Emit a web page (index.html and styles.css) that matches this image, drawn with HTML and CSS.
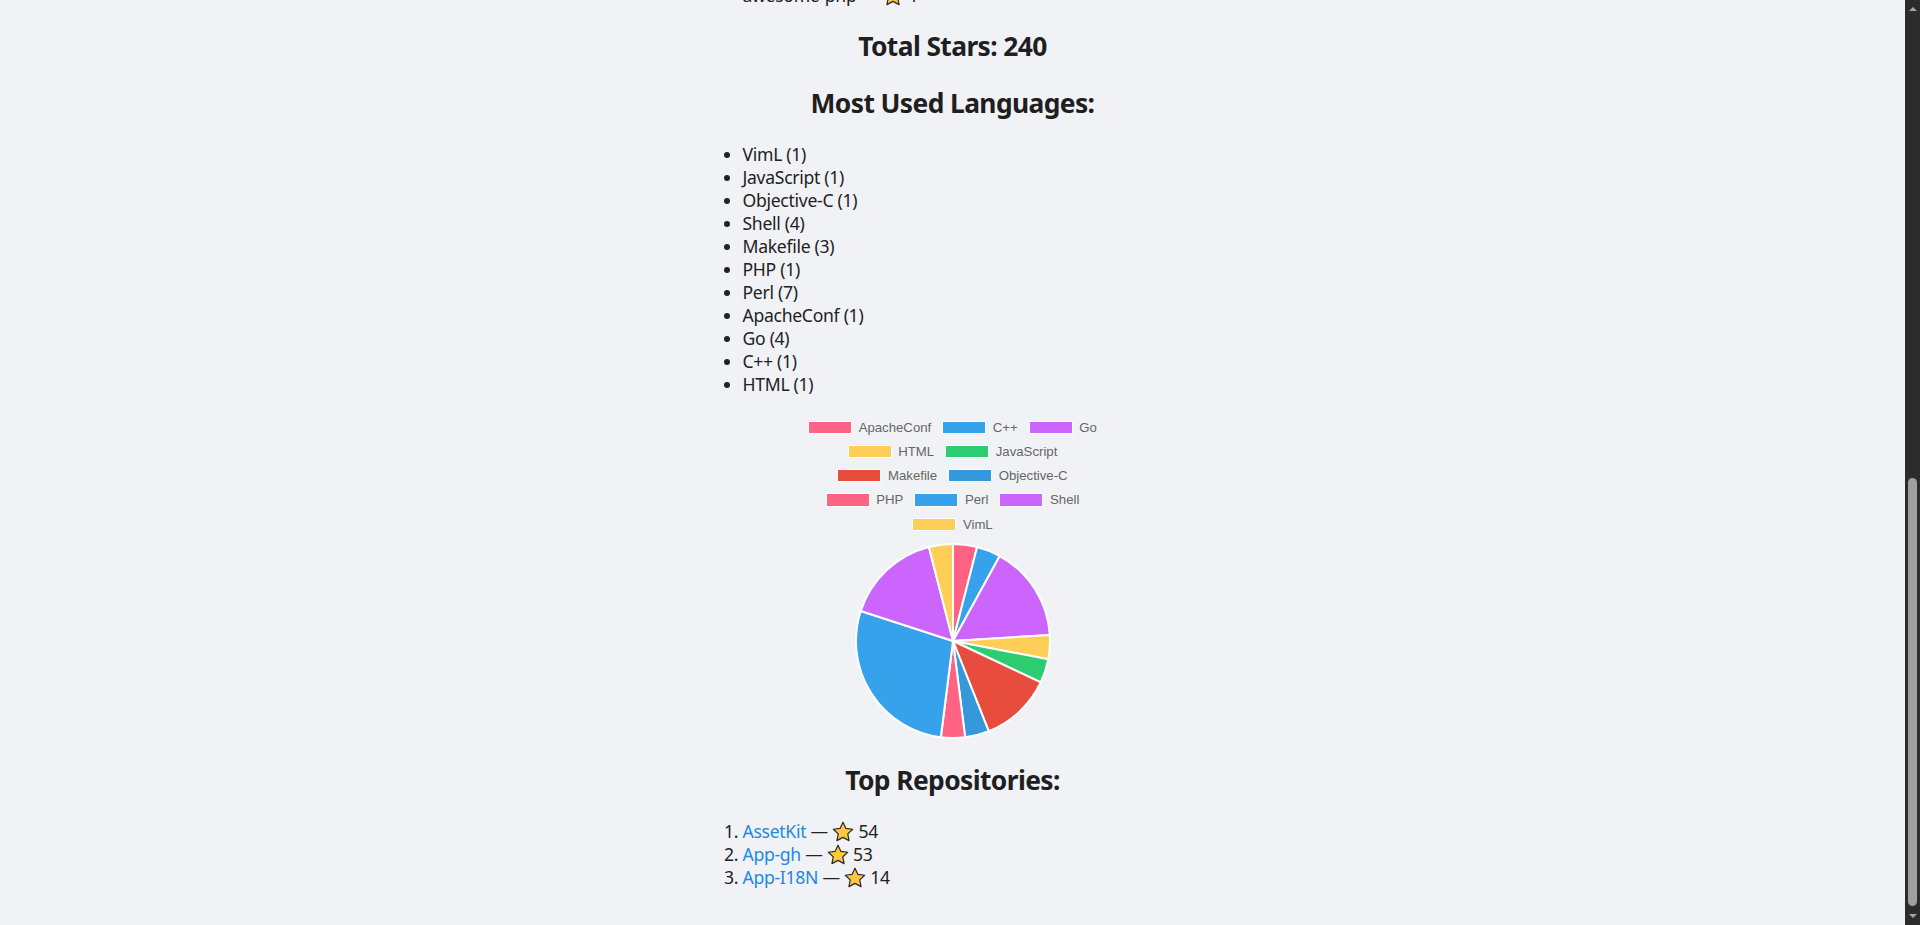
FILE: index.html
```html
<!DOCTYPE html>
<html lang="en">
<head>
<meta charset="utf-8">
<title>GitHub Stats</title>
<link rel="stylesheet" href="styles.css">
</head>
<body>
<div class="window">
  <main class="page">
    <div class="container">
      <ul class="list prev">
        <li>awesome-php — <svg class="star" viewBox="0 0 24 24"><path d="M12 2.2l2.95 6.2 6.75.85-4.95 4.65 1.3 6.75L12 17.35l-6.05 3.3 1.3-6.75L2.3 9.25l6.75-.85z"/></svg> 1</li>
      </ul>
      <h2>Total Stars: 240</h2>
      <h2>Most Used Languages:</h2>
      <ul class="list">
        <li>VimL (1)</li>
        <li>JavaScript (1)</li>
        <li>Objective-C (1)</li>
        <li>Shell (4)</li>
        <li>Makefile (3)</li>
        <li>PHP (1)</li>
        <li>Perl (7)</li>
        <li>ApacheConf (1)</li>
        <li>Go (4)</li>
        <li>C++ (1)</li>
        <li>HTML (1)</li>
      </ul>
      <div class="chart">
        <div class="legend">
          <div class="legend-row">
            <span class="legend-item"><span class="swatch c-pink"></span>ApacheConf</span>
            <span class="legend-item"><span class="swatch c-blue"></span>C++</span>
            <span class="legend-item"><span class="swatch c-purple"></span>Go</span>
          </div>
          <div class="legend-row">
            <span class="legend-item"><span class="swatch c-yellow"></span>HTML</span>
            <span class="legend-item"><span class="swatch c-green"></span>JavaScript</span>
          </div>
          <div class="legend-row">
            <span class="legend-item"><span class="swatch c-red"></span>Makefile</span>
            <span class="legend-item"><span class="swatch c-blue2"></span>Objective-C</span>
          </div>
          <div class="legend-row">
            <span class="legend-item"><span class="swatch c-pink"></span>PHP</span>
            <span class="legend-item"><span class="swatch c-blue"></span>Perl</span>
            <span class="legend-item"><span class="swatch c-purple"></span>Shell</span>
          </div>
          <div class="legend-row">
            <span class="legend-item"><span class="swatch c-yellow"></span>VimL</span>
          </div>
        </div>
        <svg class="pie" viewBox="-98 -98 196 196">
          <g stroke="#ffffff" stroke-width="2" stroke-linejoin="round">
            <path fill="#FF6384" d="M0 0 L0 -97 A97 97 0 0 1 24.12 -93.96 Z"/>
            <path fill="#36A2EB" d="M0 0 L24.12 -93.96 A97 97 0 0 1 46.73 -85.00 Z"/>
            <path fill="#CC65FE" d="M0 0 L46.73 -85.00 A97 97 0 0 1 96.81 -6.09 Z"/>
            <path fill="#FFCE56" d="M0 0 L96.81 -6.09 A97 97 0 0 1 95.28 18.18 Z"/>
            <path fill="#2ECC71" d="M0 0 L95.28 18.18 A97 97 0 0 1 87.77 41.30 Z"/>
            <path fill="#E74C3C" d="M0 0 L87.77 41.30 A97 97 0 0 1 35.71 90.19 Z"/>
            <path fill="#3498DB" d="M0 0 L35.71 90.19 A97 97 0 0 1 12.16 96.24 Z"/>
            <path fill="#FF6384" d="M0 0 L12.16 96.24 A97 97 0 0 1 -12.16 96.24 Z"/>
            <path fill="#36A2EB" d="M0 0 L-12.16 96.24 A97 97 0 0 1 -92.25 -29.98 Z"/>
            <path fill="#CC65FE" d="M0 0 L-92.25 -29.98 A97 97 0 0 1 -24.12 -93.96 Z"/>
            <path fill="#FFCE56" d="M0 0 L-24.12 -93.96 A97 97 0 0 1 0 -97 Z"/>
          </g>
        </svg>
      </div>
      <h2>Top Repositories:</h2>
      <ol class="list">
        <li><a href="#">AssetKit</a> — <svg class="star" viewBox="0 0 24 24"><path d="M12 2.2l2.95 6.2 6.75.85-4.95 4.65 1.3 6.75L12 17.35l-6.05 3.3 1.3-6.75L2.3 9.25l6.75-.85z"/></svg> 54</li>
        <li><a href="#">App-gh</a> — <svg class="star" viewBox="0 0 24 24"><path d="M12 2.2l2.95 6.2 6.75.85-4.95 4.65 1.3 6.75L12 17.35l-6.05 3.3 1.3-6.75L2.3 9.25l6.75-.85z"/></svg> 53</li>
        <li><a href="#">App-I18N</a> — <svg class="star" viewBox="0 0 24 24"><path d="M12 2.2l2.95 6.2 6.75.85-4.95 4.65 1.3 6.75L12 17.35l-6.05 3.3 1.3-6.75L2.3 9.25l6.75-.85z"/></svg> 14</li>
      </ol>
    </div>
  </main>
  <div class="scrollbar">
    <div class="sb-arrow"><span class="tri-up"></span></div>
    <div class="sb-space"></div>
    <div class="sb-thumb"></div>
    <div class="sb-arrow sb-arrow-down"><span class="tri-down"></span></div>
  </div>
</div>
</body>
</html>
```

FILE: styles.css
```css
html, body {
  margin: 0;
  padding: 0;
  height: 100%;
  overflow: hidden;
  background: #f0f2f5;
}

body {
  font-family: "Noto Sans", "Open Sans", sans-serif;
  font-size: 17.6px;
  color: #222222;
}

.window {
  display: flex;
  height: 925px;
}

.page {
  flex: 1;
  overflow: hidden;
}

.container {
  max-width: 500px;
  margin: 0 auto;
}

h2 {
  font-size: 26.4px;
  line-height: 35px;
  font-weight: 700;
  margin: 22px 0;
  text-align: center;
  color: #1f1f1f;
  letter-spacing: -0.6px;
}

.list {
  margin: 17.6px 0;
  padding-left: 40px;
  line-height: 23px;
  letter-spacing: -0.3px;
}

.prev {
  margin-top: -16.2px;
}

.list a {
  color: #1e88e5;
  text-decoration: none;
}

.star {
  width: 24px;
  height: 24px;
  margin: -3px -1px;
  vertical-align: -3px;
}

.star path {
  fill: #ffc83d;
  stroke: #2a2a2a;
  stroke-width: 1.2;
  stroke-linejoin: round;
}

.chart {
  width: 330px;
  height: 328px;
  margin: 0 auto;
}

.legend {
  padding-top: 7.5px;
  display: flex;
  flex-direction: column;
}

.legend-row {
  display: flex;
  justify-content: center;
  align-items: flex-start;
  height: 24.2px;
}

.legend-item {
  display: flex;
  align-items: center;
  height: 13.2px;
  margin: 0 5.5px;
  font-family: "Liberation Sans", Arial, sans-serif;
  font-size: 13.2px;
  line-height: 13.2px;
  color: #666666;
  white-space: nowrap;
}

.swatch {
  width: 42px;
  height: 11.2px;
  border: 1px solid #ffffff;
  margin-right: 6.6px;
}

.c-pink { background: #FF6384; }
.c-blue { background: #36A2EB; }
.c-purple { background: #CC65FE; }
.c-yellow { background: #FFCE56; }
.c-green { background: #2ECC71; }
.c-red { background: #E74C3C; }
.c-blue2 { background: #3498DB; }

.pie {
  display: block;
  width: 196px;
  height: 196px;
  margin: 1.5px auto 0;
}

.scrollbar {
  width: 15px;
  background: #2c2c2c;
  display: flex;
  flex-direction: column;
  align-items: center;
}

.sb-arrow {
  height: 17px;
  width: 15px;
  display: flex;
  align-items: center;
  justify-content: center;
}

.sb-arrow-down {
  height: 19px;
}

.tri-up {
  width: 0;
  height: 0;
  border-left: 4.5px solid transparent;
  border-right: 4.5px solid transparent;
  border-bottom: 4px solid #a3a3a3;
}

.tri-down {
  width: 0;
  height: 0;
  border-left: 4.5px solid transparent;
  border-right: 4.5px solid transparent;
  border-top: 4px solid #a3a3a3;
}

.sb-space {
  flex: 1;
}

.sb-thumb {
  width: 9px;
  height: 428px;
  background: #9f9f9f;
  border-radius: 5px;
}
```
